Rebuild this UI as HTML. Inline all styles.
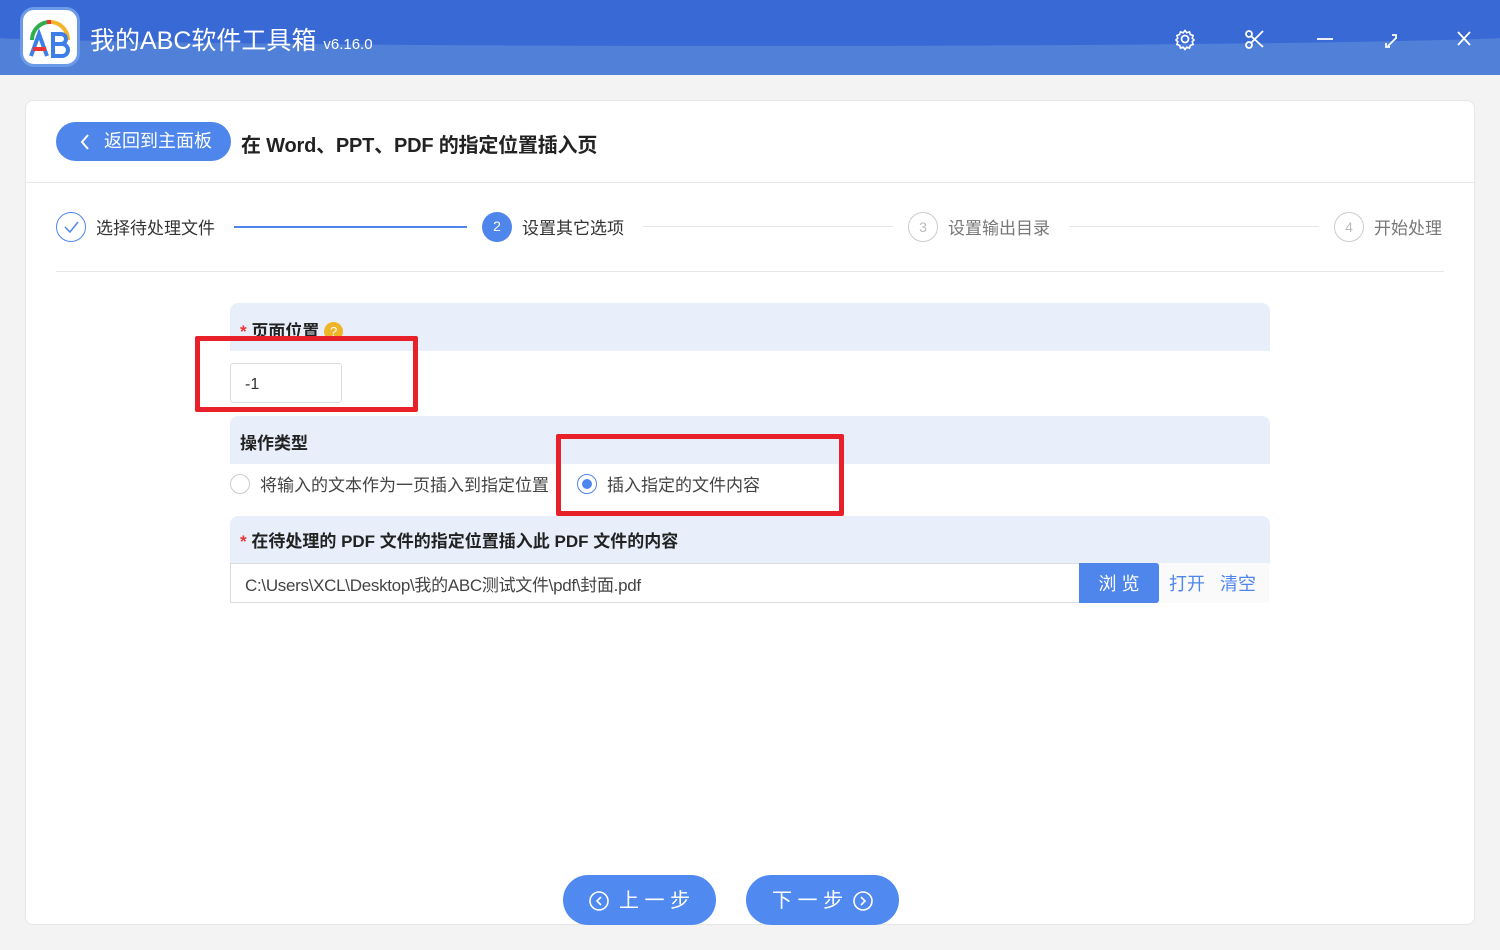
<!DOCTYPE html>
<html><head><meta charset="utf-8"><style>
*{box-sizing:border-box;margin:0;padding:0}
body{width:1500px;height:950px;overflow:hidden;background:#f3f3f3;font-family:"Liberation Sans","Noto Sans CJK SC",sans-serif;position:relative;color:#333}
.abs{position:absolute}
.tb{left:0;top:0;width:1500px;height:75px;background:#5080d8;overflow:hidden}
.tb .dark{left:-50px;top:-200px;width:1600px;height:246px;background:#3869d4;border-radius:0 0 50% 50%/0 0 12px 12px}
.card{left:25px;top:100px;width:1450px;height:825px;background:#fff;border:1px solid #e6e6e6;border-radius:8px}
.sec{background:#e8effb;border-radius:8px 8px 0 0;height:48px;font-size:17px;font-weight:bold;color:#222;padding:12px 10px}
.red{border:5px solid #e8202a;border-radius:2px}
.step{font-size:17px;color:#333}
.circ{width:30px;height:30px;border-radius:50%;text-align:center;line-height:28px;font-size:14px}
</style></head><body>
<div class="abs tb"><div class="abs dark"></div></div>
<div class="abs" style="left:20px;top:7px;width:60px;height:60px;border-radius:14px;background:#fff;border:3px solid #6a9ae8">
<svg width="54" height="54" viewBox="0 0 54 54"><path d="M9 30 A18 18 0 0 1 27 12" stroke="#2fae4a" stroke-width="4" fill="none"/><path d="M27 12 A18 18 0 0 1 45 30" stroke="#f5b52a" stroke-width="4" fill="none"/><path d="M28 12 l-4 0" stroke="#e33" stroke-width="4"/>
<path d="M8 46 L16 24 L24 46" stroke="#3d7fe8" stroke-width="4" fill="none"/><path d="M10 39 h13" stroke="#e33" stroke-width="4"/>
<path d="M30 24 h8 a5 5 0 0 1 0 10 h-8 z M30 34 h9 a6 6 0 0 1 0 12 h-9 z" stroke="#3d7fe8" stroke-width="4" fill="none"/></svg></div>
<div class="abs" style="left:90px;top:21px;font-size:25px;color:#fff">我的ABC软件工具箱 <span style="font-size:15px">v6.16.0</span></div>
<svg class="abs" style="left:1170px;top:25px" width="310" height="30" fill="none" stroke="#fff" stroke-width="1.8">
<circle cx="15" cy="14" r="3.5"/><path d="M15 5 l2 2.5 3 -1 1 3 3 1 -1 3 2 2 -2 2 1 3 -3 1 -1 3 -3 -1 -2 2.5 -2 -2.5 -3 1 -1 -3 -3 -1 1 -3 -2 -2 2 -2 -1 -3 3 -1 1 -3 3 1z" transform="translate(1.5 1) scale(0.9)"/>
<circle cx="79" cy="20" r="3"/><circle cx="79" cy="9" r="3"/><path d="M81 18 L93 6 M81 11 L93 22"/>
<path d="M147 14 h16"/><path d="M218 21 l8 -8 M222 10 h4 v4 M216 18 v4 h4"/>
<path d="M288 7 l12 13 M300 7 l-12 13"/></svg>
<div class="abs card"></div>
<div class="abs" style="left:56px;top:122px;width:175px;height:39px;border-radius:20px;background:#4f86ec;color:#fff;font-size:18px;line-height:39px;padding-left:48px">返回到主面板</div>
<svg class="abs" style="left:78px;top:133px" width="14" height="18"><path d="M10 2 L4 9 L10 16" stroke="#fff" stroke-width="2" fill="none"/></svg>
<div class="abs" style="left:241px;top:129px;font-size:20px;font-weight:bold;color:#222;letter-spacing:-0.2px">在 Word、PPT、PDF 的指定位置插入页</div>
<div class="abs" style="left:26px;top:182px;width:1448px;height:1px;background:#e8e8e8"></div>
<div class="abs circ" style="left:56px;top:212px;border:1px solid #4f86ec"><svg width="28" height="28"><path d="M8 14 l5 5 8 -10" stroke="#4f86ec" stroke-width="1.5" fill="none"/></svg></div>
<div class="abs step" style="left:96px;top:214px">选择待处理文件</div>
<div class="abs" style="left:234px;top:226px;width:233px;height:2px;background:#4f86ec"></div>
<div class="abs circ" style="left:482px;top:212px;background:#4f86ec;color:#fff">2</div>
<div class="abs step" style="left:522px;top:214px">设置其它选项</div>
<div class="abs" style="left:643px;top:226px;width:250px;height:1px;background:#e6e6e6"></div>
<div class="abs circ" style="left:908px;top:212px;border:1px solid #ccc;color:#bbb">3</div>
<div class="abs step" style="left:948px;top:214px;color:#777">设置输出目录</div>
<div class="abs" style="left:1069px;top:226px;width:250px;height:1px;background:#e6e6e6"></div>
<div class="abs circ" style="left:1334px;top:212px;border:1px solid #ccc;color:#bbb">4</div>
<div class="abs step" style="left:1374px;top:214px;color:#777">开始处理</div>
<div class="abs" style="left:56px;top:271px;width:1388px;height:1px;background:#e8e8e8"></div>

<div class="abs sec" style="left:230px;top:303px;width:1040px;padding-top:14px"><span style="color:#e33">*</span> 页面位置 <span style="display:inline-block;width:19px;height:19px;border-radius:50%;background:#f0b429;color:#fff;font-size:13px;text-align:center;line-height:19px;font-weight:normal;vertical-align:1px">?</span></div>
<div class="abs" style="left:230px;top:363px;width:112px;height:40px;border:1px solid #dcdcdc;border-radius:3px;font-size:16px;padding:12px 14px">-1</div>
<div class="abs red" style="left:195px;top:336px;width:223px;height:76px"></div>

<div class="abs sec" style="left:230px;top:416px;width:1040px;padding-top:13px">操作类型</div>
<div class="abs" style="left:230px;top:474px;width:20px;height:20px;border-radius:50%;border:1px solid #ccc"></div>
<div class="abs" style="left:260px;top:471px;font-size:17px;color:#444">将输入的文本作为一页插入到指定位置</div>
<div class="abs" style="left:577px;top:474px;width:20px;height:20px;border-radius:50%;border:1px solid #4f86ec"><div style="margin:4px;width:10px;height:10px;border-radius:50%;background:#4f86ec"></div></div>
<div class="abs" style="left:607px;top:471px;font-size:17px;color:#444">插入指定的文件内容</div>
<div class="abs red" style="left:556px;top:434px;width:288px;height:82px"></div>

<div class="abs sec" style="left:230px;top:516px;width:1040px;padding-top:11px"><span style="color:#e33">*</span> 在待处理的 PDF 文件的指定位置插入此 PDF 文件的内容</div>
<div class="abs" style="left:230px;top:563px;width:850px;height:40px;border:1px solid #dcdcdc;font-size:17px;padding:7px 14px;color:#444;letter-spacing:-0.3px">C:\Users\XCL\Desktop\我的ABC测试文件\pdf\封面.pdf</div>
<div class="abs" style="left:1079px;top:563px;width:80px;height:40px;background:#4f86ec;border-radius:0 3px 3px 0;color:#fff;font-size:18px;text-align:center;line-height:42px">浏 览</div>
<div class="abs" style="left:1159px;top:563px;width:110px;height:40px;background:#fafafa;color:#4f86ec;font-size:18px;line-height:42px;padding-left:10px">打开 &nbsp;&nbsp;清空</div>

<div class="abs" style="left:563px;top:875px;width:153px;height:50px;border-radius:25px;background:#5089ef;color:#fff;font-size:20px;line-height:52px;padding-left:56px">上 一 步</div>
<svg class="abs" style="left:588px;top:890px" width="22" height="22"><circle cx="11" cy="11" r="9" stroke="#fff" stroke-width="1.6" fill="none"/><path d="M13 7 l-4 4 4 4" stroke="#fff" stroke-width="1.6" fill="none"/></svg>
<div class="abs" style="left:746px;top:875px;width:153px;height:50px;border-radius:25px;background:#5089ef;color:#fff;font-size:20px;line-height:52px;padding-left:26px">下 一 步</div>
<svg class="abs" style="left:852px;top:890px" width="22" height="22"><circle cx="11" cy="11" r="9" stroke="#fff" stroke-width="1.6" fill="none"/><path d="M9 7 l4 4 -4 4" stroke="#fff" stroke-width="1.6" fill="none"/></svg>
</body></html>
